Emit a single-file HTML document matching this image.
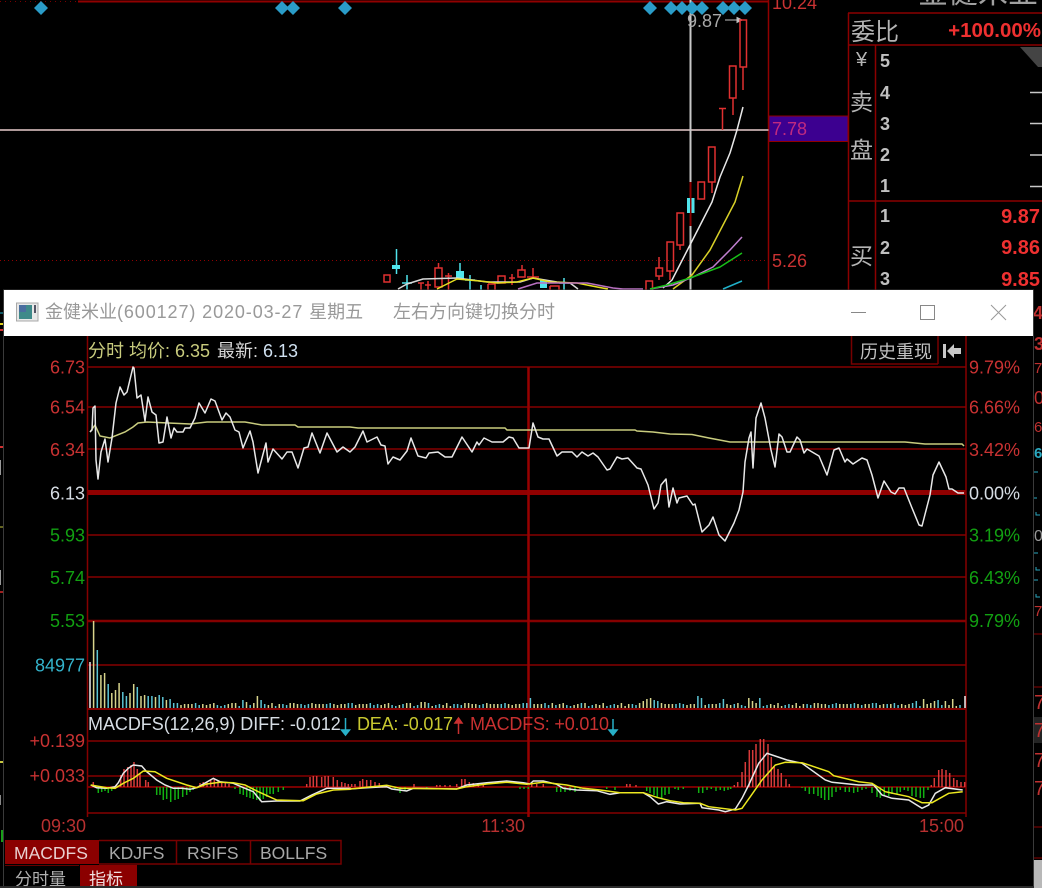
<!DOCTYPE html>
<html lang="zh">
<head>
<meta charset="utf-8">
<title>金健米业</title>
<style>
html,body{margin:0;padding:0;background:#000;width:1042px;height:888px;overflow:hidden}
svg{display:block;position:absolute;left:0;top:0}
text{font-family:"Liberation Sans","Noto Sans CJK SC",sans-serif;font-size:18px}
.r{fill:#c93232}.g{fill:#12a012}.w{fill:#d6dde4}
.e{text-anchor:end}
</style>
</head>
<body>
<svg width="1042" height="888" viewBox="0 0 1042 888" xmlns="http://www.w3.org/2000/svg">
<!-- background chart -->
<path d="M0 1.5H78" stroke="#700" stroke-dasharray="1 4" fill="none"/>
<path d="M78 1.5H768" stroke="#900000" stroke-width="2" fill="none"/>
<path d="M0 260.5H768" stroke="#900000" stroke-dasharray="1 3" fill="none"/>
<path d="M768.5 0V290" stroke="#900000" stroke-width="1.5" fill="none"/>
<path d="M0 130H769" stroke="#e8cccc" stroke-width="1.500" fill="none"/>
<path d="M690.5 0V290" stroke="#c8c8c8" stroke-width="2" fill="none"/>
<path d="M690.5 182V226" stroke="#8b0000" stroke-width="2" fill="none"/>
<rect x="769" y="116" width="79" height="25.500" fill="#3c0090" stroke="#900000"/>
<text x="772" y="135" fill="#c02a80">7.78</text>
<text x="772" y="267" class="r">5.26</text>
<text x="772" y="9" class="r">10.24</text>
<g fill="#2a9cc8">
<path d="M41 1l7 7-7 7-7-7z"/>
<path d="M282 1l7 7-7 7-7-7zM293 1l7 7-7 7-7-7zM345 1l7 7-7 7-7-7zM650 1l7 7-7 7-7-7zM671 1l7 7-7 7-7-7zM682 1l7 7-7 7-7-7zM692 1l7 7-7 7-7-7zM702 1l7 7-7 7-7-7zM723 1l7 7-7 7-7-7zM734 1l7 7-7 7-7-7zM745 1l7 7-7 7-7-7z"/>
</g>
<text x="687" y="27" fill="#a8a8a8">9.87</text>
<path d="M725 20H741M737 17.500L742 20 737 22.500z" stroke="#c0c0c0" fill="#c0c0c0"/>
<!-- candles -->
<g fill="none" stroke="#e03030" stroke-width="1.500">
<rect x="740" y="20" width="6.500" height="47"/><path d="M743 67V90"/>
<rect x="729.500" y="66" width="6.500" height="32"/><path d="M733 98V115"/>
<path d="M719 108.500H726M722.500 108.500V130"/>
<rect x="708.500" y="147" width="6.500" height="35"/><path d="M712 182V193"/>
<rect x="698" y="182" width="6.500" height="17"/>
<rect x="677" y="213" width="6.500" height="32"/><path d="M680 245V250"/>
<rect x="667" y="242" width="6.500" height="29"/><path d="M670 271V280"/>
<rect x="656" y="268" width="6.500" height="8"/><path d="M659 257V268M659 276V280"/>
<rect x="646" y="281" width="6.500" height="10"/>
<rect x="384" y="275" width="6" height="7"/>
<path d="M418 283H424M421 283V290M428 290V281M425 285H431"/>
<rect x="435" y="268" width="7" height="19"/><path d="M438.500 263V268"/>
<path d="M445 276H452M448.500 273V290"/>
<rect x="498" y="276" width="7" height="7"/>
<path d="M509 278H515M512 274V285"/>
<rect x="518" y="270" width="7" height="7"/><path d="M522 265V270"/>
<path d="M527 277H539M533 268V279"/>
<path d="M488 284H495V290M488 284V290"/>
<path d="M550 286H559V290M550 286V290"/>
</g>
<g fill="none" stroke="#50e4ec" stroke-width="1.500">
<path d="M396.500 249V274M407 275V290M402 283H412M470 275V290M465 280H475M460 263V272M481 285V290M564 278V290M559 283H569"/>
</g>
<g fill="#50e4ec">
<rect x="392" y="265" width="8" height="4"/>
<rect x="456" y="271" width="8" height="7.500"/>
<rect x="540" y="280" width="7" height="8"/>
<rect x="687" y="198" width="3" height="15"/><rect x="691.500" y="198" width="3" height="15"/>
</g>
<g fill="none" stroke-width="1.500" stroke-linejoin="round">
<path stroke="#d8d8d8" d="M398 289 407 284 423 279 457 278 487 282 520 282 533 278 557 282 570 283 578 289"/>
<path stroke="#e6e020" d="M437 289 457 279 480 281 497 283 517 282 533 278 550 282 577 283 597 287 608 289"/>
<path stroke="#b870c0" d="M518 289 537 283 587 283 613 288 623 289 643 289"/>
<path stroke="#e8e8e8" d="M663 288 672 280 690 245 712 202 720 177 730 153 737 130 743 107"/>
<path stroke="#d8d028" d="M673 289 692 275 710 250 735 202 743 176"/>
<path stroke="#c080d0" d="M650 289 673 285 693 277 713 267 730 250 742 237"/>
<path stroke="#18c018" d="M650 289 667 285 690 278 720 267 742 253"/>
<path stroke="#20b0c8" d="M723 289 742 281"/>
</g>
<!-- right panel -->
<g fill="none" stroke="#8b0000" stroke-width="1.500">
<path d="M848.500 13V290M848 13H1042M848 45H1042M875.500 45V290M848 201H1042"/>
</g>
<text x="851" y="40" fill="#b4b4b4" style="font-size:24px">委比</text>
<text x="1041" y="37" class="e" fill="#ee3030" style="font-size:20.500px;font-weight:bold">+100.00%</text>
<text x="856" y="66" fill="#b4b4b4" style="font-size:20px">¥</text>
<text x="850" y="110" fill="#b4b4b4" style="font-size:23px">卖</text>
<text x="850" y="158" fill="#b4b4b4" style="font-size:23px">盘</text>
<text x="850" y="264" fill="#b4b4b4" style="font-size:23px">买</text>
<g fill="#c0c0c0">
<text x="880" y="67" style="font-weight:bold">5</text><text x="880" y="99" style="font-weight:bold">4</text><text x="880" y="130" style="font-weight:bold">3</text><text x="880" y="161" style="font-weight:bold">2</text><text x="880" y="192" style="font-weight:bold">1</text><text x="880" y="222" style="font-weight:bold">1</text><text x="880" y="254" style="font-weight:bold">2</text><text x="880" y="285" style="font-weight:bold">3</text>
</g>
<text x="1040" y="223" class="e" fill="#ee3030" style="font-weight:bold;font-size:20px">9.87</text>
<text x="1040" y="254" class="e" fill="#ee3030" style="font-weight:bold;font-size:20px">9.86</text>
<text x="1040" y="286" class="e" fill="#ee3030" style="font-weight:bold;font-size:20px">9.85</text>
<path d="M1030 92.500H1042M1030 123.500H1042M1030 155H1042M1030 186.500H1042" stroke="#c8c8c8" stroke-width="1.500"/>
<path d="M1020 47H1042V67H1038z" fill="#444"/>
<text x="918" y="3" fill="#a0a0a0" style="font-size:30px">金健米业</text>
<!-- right edge fragments -->
<g fill="#c03030">
<text x="1033" y="319" style="font-weight:bold;font-size:18px">4</text>
<text x="1034" y="350" style="font-weight:bold;font-size:18px">3</text>
<text x="1034" y="373" style="font-size:15px">7</text>
<text x="1034" y="404" style="font-size:18px">0</text>
<text x="1034" y="432" style="font-size:15px">6</text>
<text x="1034" y="616" style="font-size:15px">7</text>
<text x="1034" y="709" style="font-size:20px">7</text>
<text x="1034" y="737" style="font-size:20px">7</text>
<text x="1034" y="767" style="font-size:20px">7</text>
<text x="1034" y="795" style="font-size:20px">7</text>
</g>
<text x="1034" y="458" fill="#2aa8c0" style="font-size:15px;font-weight:bold">6</text>
<text x="1034" y="541" fill="#999" style="font-size:16px">0</text>
<path d="M1034 472H1038M1034 498H1037M1036 512V515H1040M1034 553H1038M1036 567V570H1040M1034 580H1038M1036 594V597H1040" fill="none" stroke="#2aa8c0"/>
<path d="M1034 634H1042M1034 687H1042M1034 827H1042M1034 858H1042" stroke="#8b0000"/>
<rect x="1034" y="717" width="8" height="26" fill="#242424"/>
<text x="1034" y="737" fill="#c03030" style="font-size:20px">7</text>
<rect x="1034" y="860" width="8" height="28" fill="#b8b8b8"/>
<!-- left edge fragments -->
<path d="M0 313H3" stroke="#20b0c8" stroke-width="1"/><path d="M0 324H3" stroke="#e0d020" stroke-width="2"/><path d="M0 330H3" stroke="#d03030" stroke-width="2"/>
<path d="M0 447H3" stroke="#d03030" stroke-width="2"/><path d="M0 460V475" stroke="#999" stroke-width="2"/><path d="M0 527H3" stroke="#c8c840"/><path d="M0 570V585" stroke="#999" stroke-width="2"/><path d="M0 592H3" stroke="#a02020" stroke-width="2"/><path d="M0 762H3" stroke="#c8c840" stroke-width="2"/><path d="M0 795V805" stroke="#888" stroke-width="2"/><rect x="1" y="830" width="3" height="12" fill="#18a018"/>
<!-- window -->
<rect x="3.500" y="290" width="1030" height="598" fill="#000" stroke="#3a3a3a"/>
<rect x="4" y="290" width="1029" height="46" fill="#fff"/>
<rect x="16.500" y="303" width="21.500" height="18" fill="#e8e8e8" stroke="#a8a8a8"/>
<rect x="19" y="305" width="13" height="14" fill="#3f8a8a"/><rect x="19" y="305" width="7" height="7" fill="#4a6ea0"/><rect x="34" y="305" width="2" height="8" fill="#556"/>
<text x="45" y="318" fill="#999">金健米业<tspan letter-spacing="0.9">(600127) 2020-03-27 </tspan>星期五</text>
<text x="393" y="318" fill="#999">左右方向键切换分时</text>
<path d="M851 312.500H866" stroke="#888" fill="none"/>
<rect x="920.500" y="305.500" width="14" height="14" fill="none" stroke="#888"/>
<path d="M991 305 1006 320M1006 305 991 320" stroke="#999" fill="none"/>
<!-- grid -->
<g fill="none" stroke="#850000">
<path d="M87 367H966M87 407H966M87 449H966M87 535H966M87 577H966" stroke-width="1.500"/>
<path d="M87 492.500H966" stroke="#900000" stroke-width="5"/>
<path d="M87 621H966" stroke-width="2.500"/>
<path d="M87 665H966" stroke-width="1.500"/>
<path d="M87 709H966" stroke-width="2"/>
<path d="M87 741H966M87 776H966M87 813H966" stroke-width="1.500"/>
<path d="M87 787H966" stroke="#a00000" stroke-width="1.500"/>
<path d="M87.500 336V817M966 336V817" stroke-width="1.500"/>
<path d="M528.500 367V817" stroke="#980000" stroke-width="2.500"/>
</g>
<!-- labels -->
<text x="88" y="357" fill="#c9cc7e">分时 均价: 6.35</text>
<text x="217" y="357" fill="#d8d8d8">最新: <tspan fill="#cfe0f0">6.13</tspan></text>
<path d="M851.500 336V364H938M938 364V336" fill="none" stroke="#700" stroke-width="1.500"/>
<text x="860" y="358" fill="#c0c0c0">历史重现</text>
<path d="M943 344H946V358H943zM947 351 954 344V348H961V354H954V358z" fill="#c8c8c8"/>
<text x="85" y="373.500" class="r e">6.73</text>
<text x="85" y="413.500" class="r e">6.54</text>
<text x="85" y="456" class="r e">6.34</text>
<text x="85" y="499.500" class="w e">6.13</text>
<text x="85" y="541.500" class="g e">5.93</text>
<text x="85" y="584" class="g e">5.74</text>
<text x="85" y="627" class="g e">5.53</text>
<text x="85" y="671.500" class="e" fill="#34b4cc">84977</text>
<text x="85" y="747" class="r e">+0.139</text>
<text x="85" y="782" class="r e">+0.033</text>
<text x="86" y="832" class="e" fill="#b83030">09:30</text>
<text x="525" y="832" class="e" fill="#b83030">11:30</text>
<text x="964" y="832" class="e" fill="#b83030">15:00</text>
<text x="969" y="373.500" class="r">9.79%</text>
<text x="969" y="413.500" class="r">6.66%</text>
<text x="969" y="456" class="r">3.42%</text>
<text x="969" y="499.500" class="w">0.00%</text>
<text x="969" y="541.500" class="g">3.19%</text>
<text x="969" y="584" class="g">6.43%</text>
<text x="969" y="627" class="g">9.79%</text>
<text x="88" y="730" fill="#d6dde4" letter-spacing="-0.05">MACDFS(12,26,9) DIFF: -0.012</text>
<text x="357" y="730" fill="#c8c830" letter-spacing="-0.2">DEA: -0.017</text>
<text x="470" y="730" fill="#c83030" letter-spacing="-0.2">MACDFS: +0.010</text>
<path d="M345.500 718V730M341.500 730H349.500L345.500 735z" stroke="#28b0c8" fill="#28b0c8" stroke-width="1.500"/>
<path d="M458.500 734V723M455 723H462L458.500 718z" stroke="#c83030" fill="#c83030" stroke-width="1.500"/>
<path d="M613 719V730M609 730H617L613 735z" stroke="#28b0c8" fill="#28b0c8" stroke-width="1.500"/>
<!-- price lines -->
<path fill="none" stroke="#c9cc7e" stroke-width="1.500" d="M90 432 95 425 100 436 110 438 125 432 133 427 138 423 147 422 190 424 207 422 245 422 262 425 295 425 298 427 350 427 358 428 505 428 507 430 635 430 637 431 653 432 670 434 692 434.500 709 438 730 442 905 442 925 444 962 444 964 446"/>
<path fill="none" stroke="#e8e8e8" stroke-width="1.500" stroke-linejoin="round" d="M90 432 92 430 93 408 95 406 96 460 98 479 101 452 105 439 108 462 112 438 116 403 120 387 124 395 127 392 133 367 134 368 137 398 141 395 145 421 148 397 152 412 156 415 159 443 163 442 167 417 171 438 174 428 177 432 183 432 185 428 190 428 195 418 199 403 205 413 211 399 215 401 222 420 226 413 230 417 235 430 239 432 243 448 250 431 253 442 258 473 266 443 268 462 273 449 282 459 287 452 292 452 298 468 304 448 308 447 312 433 320 453 327 433 337 452 343 447 350 452 355 447 363 431 367 442 377 437 381 445 385 446 388 464 393 457 400 460 407 451 411 438 418 456 426 458 429 453 438 452 445 457 452 457 462 437 472 452 477 442 479 445 484 438 492 442 503 442 509 437 513 438 519 448 529 448 533 423 538 437 543 439 549 439 557 456 562 452 572 452 577 457 582 452 588 456 593 453 598 457 607 470 610 469 617 457 622 459 628 458 637 468 641 469 648 485 654 509 658 503 661 485 666 479 669 507 673 488 677 503 679 498 687 496 693 505 695 504 702 532 709 525 713 517 719 535 725 541 734 523 739 510 743 492 745 462 749 438 751 432 753 468 756 418 761 403 765 418 771 450 775 467 779 434 782 437 787 452 790 452 797 437 800 440 804 453 807 449 819 456 827 475 834 450 839 448 845 462 847 459 853 464 862 458 867 460 872 475 878 498 884 481 891 492 895 494 899 488 904 488 912 508 919 525 922 526 930 495 933 475 939 462 946 477 949 489 952 489 958 493 964 493"/>
<!-- generated bars -->
<path id="vb" fill="none" stroke="#5cc4d4" stroke-width="1.500"/>
<path id="vy" fill="none" stroke="#d8d48c" stroke-width="1.500"/>
<path id="vw" fill="none" stroke="#eee" stroke-width="1.500" d="M90 708V662M965 708V696"/>
<path id="hr" fill="none" stroke="#d83a3a" stroke-width="1.500"/>
<path id="hg" fill="none" stroke="#12b012" stroke-width="1.500"/>
<path id="dw" fill="none" stroke="#e8e8e8" stroke-width="1.500"/>
<path id="dy" fill="none" stroke="#ece820" stroke-width="1.500"/>
<!-- tabs -->
<rect x="5" y="840" width="94" height="24" fill="#8b0000"/>
<path d="M99 840.500H341V864H99M176.500 841V864M250.500 841V864" fill="none" stroke="#700"  stroke-width="1.500"/>
<text x="14" y="859" fill="#e8d0d0" style="font-size:17.500px">MACDFS</text>
<text x="109" y="859" fill="#a8a8a8" style="font-size:17.500px">KDJFS</text>
<text x="187" y="859" fill="#a8a8a8" style="font-size:17.500px">RSIFS</text>
<text x="260" y="859" fill="#a8a8a8" style="font-size:17.500px">BOLLFS</text>
<rect x="80" y="865" width="57" height="23" fill="#8b0000"/>
<path d="M5 865.500H79" stroke="#600" fill="none"/>
<text x="15" y="885" fill="#b0b0b0" style="font-size:17px">分时量</text>
<text x="89" y="885" fill="#f0e0e0" style="font-size:17px">指标</text>
<rect x="0" y="886" width="1034" height="2" fill="#2c2c2c"/>
</svg>
<script>
(function(){
var $=function(i){return document.getElementById(i)};
var h0=[46,87,58,33,35,24,15,18,25,16,12,15,24,21,12,13,12,12,11,13,11,8,9];
var c0="wybyybyyybbyybyybbybbyb";
var over={243:8,247:6,258:12,262:8,423:6,531:10,553:5,643:7,647:9,651:10,655:8,658:7,698:12,702:10,725:9,722:7,750:10,754:7,760:10,924:9,917:7,954:9,946:7,935:7,939:8};
var pat=[4,3,5,4,3,4,5,3,4,2,5,4];
var b="",y="";
for(var i=1;i<241;i++){
 var x=90+3.64*i,h,c;
 if(i<23){h=h0[i];c=c0[i];}
 else{
  h=pat[(i*7+(i>>2))%12];c=((i*5+(i>>1))%3==0)?"b":"y";
  if(i%7==2)c="b";
  for(var k in over){if(Math.abs(+k-x)<1.9){h=over[k];}}
 }
 if(i==240)continue;
 var s="M"+x.toFixed(1)+" 708V"+(708-h);
 if(c=="b")b+=s;else y+=s;
}
$("vb").setAttribute("d",b);$("vy").setAttribute("d",y);
var R="",G="";
function up(o,l){for(var j=0;j<l.length;j+=2)R+="M"+(o+l[j]/3).toFixed(1)+" 787V"+(787-l[j+1]);}
function dn(o,l){for(var j=0;j<l.length;j+=2)G+="M"+(o+l[j]/3).toFixed(1)+" 787V"+(787+l[j+1]);}
up(0,[280,5,350,3,362,12,372,18,383,20,393,22,402,25,412,18,420,13,437,7,445,5,600,4,610,5,621,5,632,7,643,8,654,7,665,5,676,4,687,3,920,3,930,10,940,11,950,11,965,10,975,11,985,11,1000,10,1012,7,1025,5,1035,4,1045,3]);
dn(0,[295,6,305,5,315,4,325,6,335,4,345,2,470,8,480,8,490,13,500,12,512,15,525,13,535,12,548,10,560,8,570,5,580,3,705,2,720,7,730,8,740,10,750,11,760,12,770,13,780,14,790,12,800,10,810,7,820,7,835,5,850,3]);
up(350,[5,3,15,3,30,6,38,8,50,7,62,7,75,5,88,4,192,3,260,2,270,2,285,2,300,2,320,3,335,8,345,8,358,5,370,4,385,4,400,3,545,3,560,3,580,3,830,3,840,3,858,2]);
dn(350,[120,2,135,3,150,6,165,4,230,1,510,2,522,2,535,2,620,5,632,5,645,5,660,4,675,5,690,2,770,2,795,3,890,4,900,6,912,8,922,10,935,12,945,8,957,7,975,2,985,3,1000,2]);
up(692,[127,2,137,5,150,15,160,25,172,37,182,37,192,43,205,48,215,48,228,43,238,30,247,20,258,18,268,14,282,8,292,3,718,2,727,9,740,17,750,18,762,17,773,14,785,9,795,7,807,5,818,5]);
dn(692,[20,6,32,6,45,3,58,2,72,4,85,3,97,4,108,3,116,2,330,1,340,4,352,7,365,7,378,9,388,11,398,13,410,13,420,10,432,5,445,3,460,5,472,5,485,6,497,5,510,3,522,2,540,6,555,10,565,11,577,8,590,9,600,7,615,7,625,5,637,3,648,4,660,9,672,10,685,11,695,11,708,3]);
$("hr").setAttribute("d",R);$("hg").setAttribute("d",G);
function ln(parts){var d="",f=1;parts.forEach(function(p){var o=p[0],l=p[1];for(var j=0;j<l.length;j+=2){d+=(f?"M":"L")+(o+l[j]/3).toFixed(1)+" "+(610+l[j+1]/3).toFixed(1);f=0;}});return d;}
$("dw").setAttribute("d",ln([[0,[272,525,290,533,320,535,345,530,355,518,370,490,385,475,400,465,425,468,440,485,470,510,495,525,520,535,545,535,570,538,590,533,610,522,640,505,660,515,700,520,735,535,760,545,785,575,830,573,900,573,935,555,980,535,1050,535]],[350,[0,537,50,533,110,530,125,537,170,543,190,535,320,537,350,525,410,518,470,513,520,518,540,522,550,513,580,513,620,523,640,535,680,540,740,542,780,553,810,548,880,548,900,560,925,582,950,575,990,582,1050,580]],[692,[30,593,80,600,100,605,130,597,150,565,170,525,200,460,225,430,285,450,330,460,400,510,420,517,500,525,545,525,570,555,600,565,650,570,690,595,710,585,730,550,760,533,812,540]]]));
$("dy").setAttribute("d",ln([[0,[272,525,320,533,345,535,370,520,400,505,430,483,465,485,500,505,560,525,590,533,620,522,660,517,700,518,735,525,775,545,830,570,910,572,950,552,1000,540,1050,538]],[350,[0,537,50,532,110,526,150,535,320,537,350,530,410,522,470,517,530,523,580,517,650,525,700,535,750,540,810,548,880,548,920,562,960,572,1000,578,1050,580]],[692,[50,590,130,600,150,595,175,560,210,510,250,465,280,457,330,458,410,485,425,497,500,515,540,520,580,545,650,560,690,578,720,578,770,550,812,545]]]));
})();
</script>
</body>
</html>
